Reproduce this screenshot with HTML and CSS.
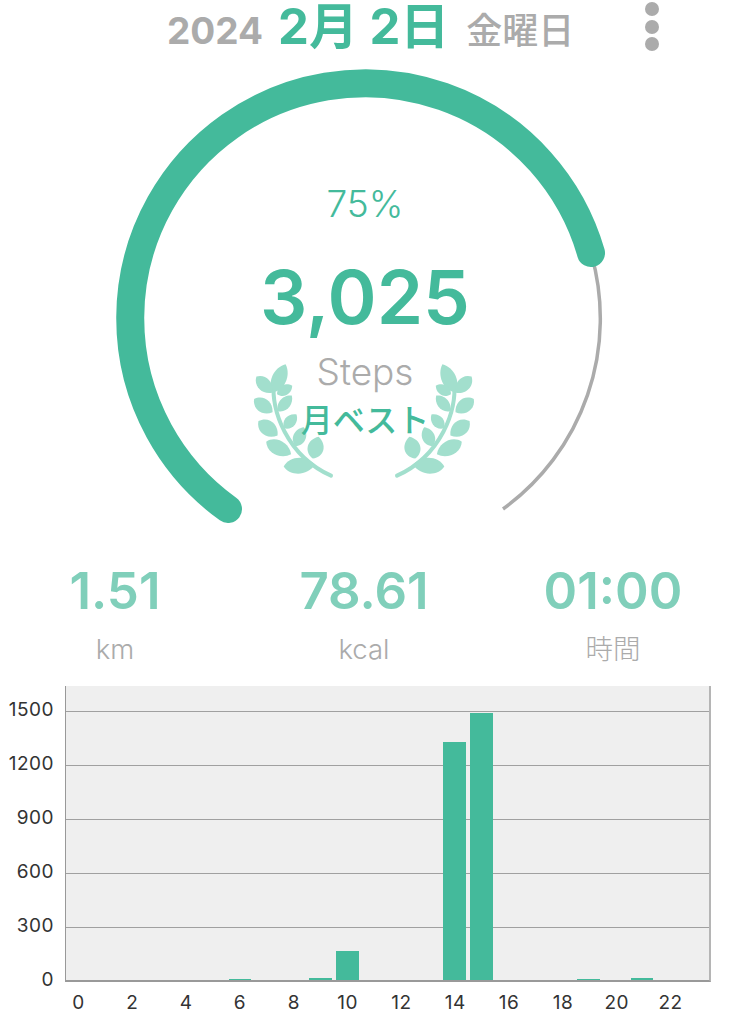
FILE: index.html
```html
<!DOCTYPE html>
<html lang="ja">
<head>
    <meta charset="UTF-8">
    <title>歩数</title>
    <link rel="stylesheet" href="styles.css">
</head>
<body>
    <header class="date-bar">
        <span class="year">2024</span>
        <span class="day">2月 2日</span>
        <span class="weekday">金曜日</span>
        <div class="menu-dots"><i></i><i></i><i></i></div>
    </header>

    <section class="ring">
        <svg class="ring-arc" viewBox="0 60 730 480" width="730" height="480">
            <path d="M591 253A235 235 0 0 1 503 509" fill="none" stroke="#ababab" stroke-width="3.5"/>
            <path d="M228 509A235 235 0 1 1 591 253" fill="none" stroke="#44ba9b" stroke-width="28" stroke-linecap="round"/>
        </svg>
        <svg class="laurel" viewBox="0 0 684 360" width="228" height="120">
            <defs>
                <path id="leaf" d="M-1 0C-.6 -1.33 .5 -1.33 1 0C.5 1.33 -.6 1.33 -1 0Z"/>
                <g id="branch">
                    <path d="M72 75C62 150 110 290 243 350" fill="none" stroke="#a2dfcd" stroke-width="12" stroke-linecap="round"/>
                    <use href="#leaf" transform="translate(88 58) rotate(-66) scale(46 22)"/>
                    <use href="#leaf" transform="translate(43 77) rotate(46) scale(34 20)"/>
                    <use href="#leaf" transform="translate(104 93) rotate(-29) scale(26 16)"/>
                    <use href="#leaf" transform="translate(40 140) rotate(36) scale(34 21)"/>
                    <use href="#leaf" transform="translate(105 133) rotate(-49) scale(31 17)"/>
                    <use href="#leaf" transform="translate(54 208) rotate(37) scale(36 23)"/>
                    <use href="#leaf" transform="translate(121 187) rotate(-48) scale(28 17)"/>
                    <use href="#leaf" transform="translate(86 267) rotate(27) scale(42 22)"/>
                    <use href="#leaf" transform="translate(149 233) rotate(-66) scale(31 19)"/>
                    <use href="#leaf" transform="translate(197 266) rotate(-75) scale(34 24)"/>
                    <use href="#leaf" transform="translate(148 320) rotate(-3) scale(47 24)"/>
                </g>
            </defs>
            <use href="#branch"/>
            <use href="#branch" transform="translate(684 0) scale(-1 1)"/>
        </svg>
        <div class="ring-text">
            <div class="percent">75%</div>
            <div class="steps">3,025</div>
            <div class="steps-label">Steps</div>
            <div class="best">月ベスト</div>
        </div>
    </section>

    <section class="stats">
        <div class="stat"><div class="stat-num">1.51</div><div class="stat-label">km</div></div>
        <div class="stat"><div class="stat-num">78.61</div><div class="stat-label">kcal</div></div>
        <div class="stat"><div class="stat-num">01:00</div><div class="stat-label">時間</div></div>
    </section>

    <section class="chart">
        <div class="y-axis">
            <span>1500</span><span>1200</span><span>900</span><span>600</span><span>300</span><span>0</span>
        </div>
        <div class="plot">
            <div class="gridline"></div>
            <div class="gridline"></div>
            <div class="gridline"></div>
            <div class="gridline"></div>
            <div class="gridline"></div>
            <div class="bars">
                <div></div><div></div><div></div><div></div><div></div><div></div>
                <div class="bar" style="height:1.5px"></div>
                <div></div><div></div>
                <div class="bar" style="height:2px"></div>
                <div class="bar" style="height:29px"></div>
                <div></div><div></div><div></div>
                <div class="bar" style="height:238px"></div>
                <div class="bar" style="height:267.5px"></div>
                <div></div><div></div><div></div>
                <div class="bar" style="height:1px"></div>
                <div></div>
                <div class="bar" style="height:2px"></div>
                <div></div><div></div>
            </div>
        </div>
        <div class="x-axis">
            <span>0</span><span>2</span><span>4</span><span>6</span><span>8</span><span>10</span>
            <span>12</span><span>14</span><span>16</span><span>18</span><span>20</span><span>22</span>
        </div>
    </section>
</body>
</html>
```

FILE: styles.css
```css
body {
    margin: 0;
    width: 730px;
    height: 1024px;
    overflow: hidden;
    background-color: #fff;
    font-family: Inter, "Noto Sans CJK JP", sans-serif;
}

/* date header */
.date-bar {
    display: flex;
    align-items: baseline;
    height: 60px;
    padding-top: 2px;
    padding-left: 167px;
    color: #ababab;
    font-weight: 700;
    box-sizing: border-box;
    line-height: 50px;
}
.year {
    font-size: 37px;
}
.day {
    margin-left: 15px;
    color: #44ba9b;
    font-size: 49px;
}
.weekday {
    margin-left: 17px;
    font-size: 36px;
    font-weight: 500;
}
.menu-dots {
    display: flex;
    flex-direction: column;
    gap: 3.5px;
    align-self: flex-start;
    margin-left: 71px;
}
.menu-dots i {
    width: 14px;
    height: 14px;
    border-radius: 50%;
    background-color: #ababab;
}

/* ring */
.ring {
    position: relative;
    height: 480px;
}
.ring-arc {
    position: absolute;
    top: 0;
    left: 0;
}
.laurel {
    position: absolute;
    top: 299px;
    left: 250px;
    fill: #a2dfcd;
}
.ring-text {
    position: relative;
    display: flex;
    flex-direction: column;
    align-items: center;
    padding-top: 122px;
    text-align: center;
}
.percent {
    color: #44ba9b;
    font-size: 37px;
    font-weight: 300;
    line-height: 44px;
}
.steps {
    margin-top: 26px;
    color: #44ba9b;
    font-size: 74.5px;
    font-weight: 600;
    line-height: 90px;
}
.steps-label {
    margin-top: 8px;
    color: #ababab;
    font-size: 37px;
    font-weight: 300;
    line-height: 44px;
}
.best {
    margin-top: 7px;
    color: #44ba9b;
    font-size: 32px;
    font-weight: 500;
    line-height: 40px;
}

/* km / kcal / time */
.stats {
    display: grid;
    grid-template-columns: 200px 200px 200px;
    column-gap: 49px;
    padding-left: 15px;
    height: 146px;
    padding-top: 21px;
    box-sizing: border-box;
    text-align: center;
}
.stat-num {
    color: #80cfba;
    font-size: 51px;
    font-weight: 600;
    line-height: 60px;
}
.stat-label {
    margin-top: 8px;
    color: #ababab;
    font-size: 27.5px;
    font-weight: 300;
    line-height: 40px;
}

/* hourly chart */
.chart {
    display: grid;
    grid-template-columns: 54px 646px;
    column-gap: 11px;
    color: #333;
    font-size: 19px;
    letter-spacing: 0.5px;
}
.y-axis {
    display: flex;
    flex-direction: column;
    height: 295px;
    margin-top: -3px;
    text-align: right;
}
.y-axis span {
    flex: none;
    height: 54.1px;
    line-height: 54.1px;
}
.plot {
    position: relative;
    height: 296px;
    padding-top: 25px;
    background-color: #efefef;
    border-left: 1px solid #999;
    border-right: 2px solid #b5b5b5;
    border-bottom: 2px solid #999;
    box-sizing: border-box;
}
.gridline {
    height: 54.1px;
    border-top: 1px solid #a0a0a0;
    box-sizing: border-box;
}
.bars {
    position: absolute;
    inset: 0;
    display: grid;
    grid-template-columns: repeat(24, 1fr);
    align-items: end;
}
.bar {
    margin: 0 2.1px;
    background-color: #44ba9b;
}
.x-axis {
    grid-column: 2;
    display: grid;
    grid-template-columns: repeat(12, 1fr);
    padding-top: 9px;
}
.x-axis span {
    width: 50%;
    text-align: center;
}
```
